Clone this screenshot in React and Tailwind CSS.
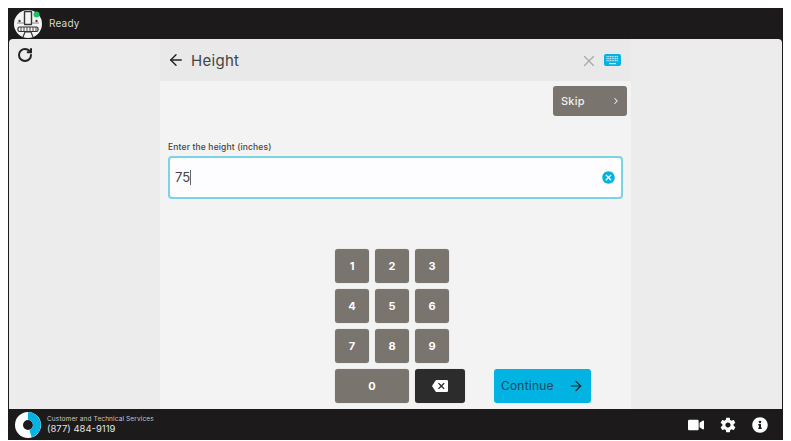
import React from 'react';
import { ArrowLeft, ArrowRight, ChevronRight, RotateCw, X } from 'lucide-react';
import { FaVideo, FaInfoCircle } from 'react-icons/fa';
import { IoMdSettings } from 'react-icons/io';
import { MdBackspace, MdCancel } from 'react-icons/md';

const font = "font-['Inter','Open_Sans',sans-serif]";

function RobotLogo() {
  return (
    <svg width="28" height="28" viewBox="0 0 28 28" className="shrink-0">
      <circle cx="14" cy="14" r="14" fill="#f4f4f4" />
      <rect x="10.5" y="1.5" width="7" height="13" rx="0.5" fill="#f4f4f4" stroke="#333" strokeWidth="1.4" />
      <circle cx="5.5" cy="11" r="1.2" fill="#444" />
      <circle cx="22.5" cy="11" r="1.2" fill="#444" />
      <path d="M3 13h7M18 13h7" stroke="#888" strokeWidth="1" />
      <rect x="4" y="17" width="20" height="4.5" rx="1.5" fill="#f4f4f4" stroke="#333" strokeWidth="1.2" />
      <path d="M7 17v4.5M10 17v4.5M13 17v4.5M16 17v4.5M19 17v4.5M22 17v4.5" stroke="#333" strokeWidth="0.9" />
      <path d="M9 27l2-5h6l2 5" fill="none" stroke="#333" strokeWidth="1.2" />
      <circle cx="22.5" cy="4.5" r="3" fill="#1fc25f" />
    </svg>
  );
}

function KeyboardIcon() {
  return (
    <svg width="17" height="12" viewBox="0 0 17 12">
      <rect width="17" height="12" rx="2" fill="#00b3e3" />
      <path d="M2.5 2.6h12M2.5 4.6h12M2.5 6.6h12" stroke="#b4e9f8" strokeWidth="1.2" strokeDasharray="1.2 0.5" />
      <rect x="5" y="9" width="7" height="1.2" fill="#d6f4fc" />
    </svg>
  );
}

function RingLogo() {
  return (
    <svg width="26" height="26" viewBox="0 0 26 26" className="shrink-0">
      <circle cx="13" cy="13" r="9" fill="none" stroke="#ffffff" strokeWidth="8" />
      <path d="M13 4a9 9 0 0 1 2.5 17.6" fill="none" stroke="#00b3e3" strokeWidth="8" />
    </svg>
  );
}

function Key({ children, className = 'w-[34px] bg-[#7a746e]' }) {
  return (
    <button className={`h-[34px] rounded-[3px] flex items-center justify-center text-white text-[11px] font-bold shadow-[0_0_1px_#aaa] ${className}`}>
      {children}
    </button>
  );
}

export default function App() {
  const rows = [['1', '2', '3'], ['4', '5', '6'], ['7', '8', '9']];

  return (
    <div className={`w-[791px] h-[441px] bg-white pt-[8px] pl-[8px] pr-[8px] pb-[1px] overflow-hidden ${font}`}>
      <div className="h-full bg-[#1c1a1a] flex flex-col">
        <div className="h-[31px] shrink-0 flex items-center pl-[6px] gap-[7px]">
          <RobotLogo />
          <span className="text-[#d8d8d8] text-[10px] font-normal tracking-[0.2px]">Ready</span>
        </div>

        <div className="flex-1 min-h-0 ml-px mr-px bg-[#ececec] rounded-t-[4px] flex overflow-hidden">
          <div className="w-[151px] shrink-0 pt-[8px] pl-[8px]">
            <RotateCw size={16} strokeWidth={3} className="text-[#222]" />
          </div>

          <div className="w-[471px] shrink-0 bg-[#f3f3f3] flex flex-col">
            <div className="h-[42px] shrink-0 bg-[#e9e9e9] flex items-center pl-[7px] pr-[10px]">
              <ArrowLeft size={18} strokeWidth={1.9} className="text-[#222]" />
              <span className="ml-[6px] mt-[2px] text-[#444] text-[15px] font-normal tracking-[0.3px]">Height</span>
              <X size={18} strokeWidth={1.6} className="ml-auto mt-[1px] text-[#a8a8a8]" />
              <span className="ml-[6px] flex"><KeyboardIcon /></span>
            </div>

            <div className="flex justify-end pt-[5px] pr-[4px]">
              <button className="w-[74px] h-[30px] bg-[#7a746e] rounded-[3px] flex items-center justify-between pl-[8px] pr-[6px] text-[#f0f0f0] text-[11px] font-medium tracking-[0.2px]">
                Skip
                <ChevronRight size={10} strokeWidth={2.5} />
              </button>
            </div>

            <label className="mt-[25px] ml-[8px] text-[#444] text-[8.5px] leading-[12px] font-medium tracking-[0.15px]">Enter the height (inches)</label>

            <div className="mt-[3px] ml-[8px] w-[455px] h-[43px] bg-[#fdfcfe] border-2 border-[#7bd3e3] rounded-[4px] flex items-center pl-[5px] pr-[5px]">
              <span className="text-[#444] text-[13px] border-r border-[#666] leading-[15px]">75</span>
              <MdCancel size={15} className="ml-auto text-[#00b3e3]" />
            </div>

            <div className="mt-[50px] ml-[175px] flex flex-col gap-[6px]">
              {rows.map((row) => (
                <div key={row[0]} className="flex gap-[6px]">
                  {row.map((n) => <Key key={n}>{n}</Key>)}
                </div>
              ))}
              <div className="flex">
                <Key className="w-[74px] bg-[#7a746e]">0</Key>
                <Key className="w-[50px] ml-[6px] bg-[#2d2c2c]"><MdBackspace size={16} /></Key>
                <button className="ml-[29px] w-[97px] h-[34px] bg-[#00b3e3] rounded-[3px] flex items-center justify-between pl-[7px] pr-[7px] text-[#1c4a5c] text-[12px] font-normal tracking-[0.2px]">
                  Continue
                  <ArrowRight size={16} strokeWidth={1.8} className="text-[#222]" />
                </button>
              </div>
            </div>
          </div>
        </div>

        <div className="h-[31px] shrink-0 flex items-center pl-[7px] pr-[15px]">
          <RingLogo />
          <div className="ml-[6px] flex flex-col">
            <span className="text-[#c8c8c8] text-[6.5px] leading-[8px] tracking-[0.12px]">Customer and Technical Services</span>
            <span className="text-[#e4e4e4] text-[9.5px] leading-[12px]">(877) 484-9119</span>
          </div>
          <div className="ml-auto flex items-center gap-[15px] text-white">
            <FaVideo size={16} />
            <IoMdSettings size={18} />
            <FaInfoCircle size={16} />
          </div>
        </div>
      </div>
    </div>
  );
}
